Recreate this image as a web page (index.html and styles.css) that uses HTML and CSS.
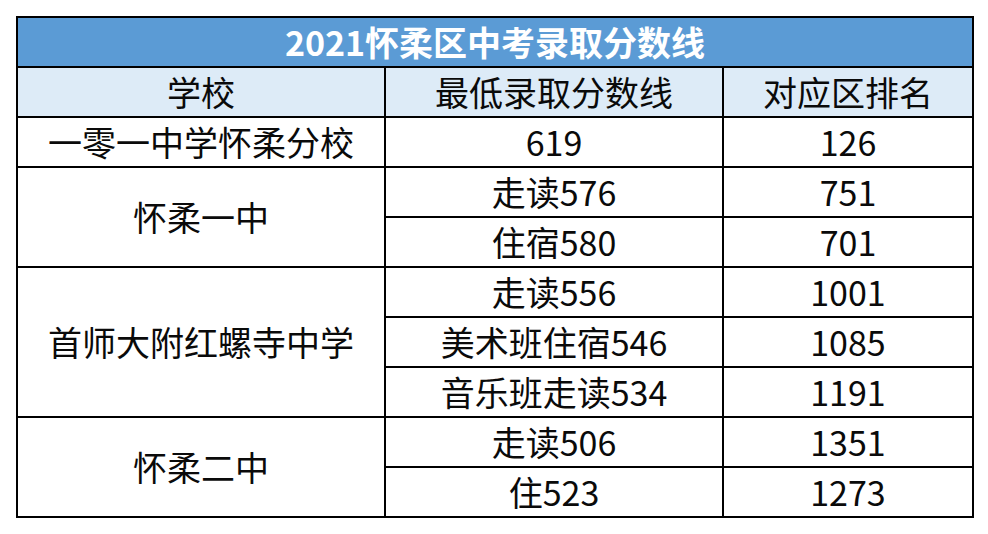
FILE: index.html
```html
<!DOCTYPE html>
<html lang="zh-CN">
<head>
<meta charset="utf-8">
<link rel="stylesheet" href="styles.css">
</head>
<body>
<div class="page">
<table class="score">
  <colgroup><col class="c1"><col class="c2"><col class="c3"></colgroup>
  <tr class="title"><td colspan="3">2021怀柔区中考录取分数线</td></tr>
  <tr class="head"><td>学校</td><td>最低录取分数线</td><td>对应区排名</td></tr>
  <tr><td>一零一中学怀柔分校</td><td>619</td><td>126</td></tr>
  <tr><td rowspan="2">怀柔一中</td><td>走读576</td><td>751</td></tr>
  <tr><td>住宿580</td><td>701</td></tr>
  <tr><td rowspan="3">首师大附红螺寺中学</td><td>走读556</td><td>1001</td></tr>
  <tr><td>美术班住宿546</td><td>1085</td></tr>
  <tr><td>音乐班走读534</td><td>1191</td></tr>
  <tr><td rowspan="2">怀柔二中</td><td>走读506</td><td>1351</td></tr>
  <tr><td>住523</td><td>1273</td></tr>
</table>
</div>
</body>
</html>
```
FILE: styles.css
```css
html, body {
  margin: 0;
  padding: 0;
  background: #ffffff;
}
.page {
  padding: 16px 0 0 16px;
}
.score {
  border-collapse: collapse;
  table-layout: fixed;
  width: 956px;
  font-family: "Noto Sans CJK SC", "Noto Sans", sans-serif;
  font-size: 34px;
  color: #0a0a0a;
}
.c1 { width: 368px; }
.c2 { width: 338px; }
.c3 { width: 250px; }
.score td {
  border: 2px solid #000000;
  height: 48px;
  padding: 0;
  text-align: center;
  vertical-align: middle;
  line-height: 48px;
  white-space: nowrap;
  overflow: hidden;
}
.title td {
  background: #5b9bd5;
  color: #ffffff;
  font-weight: 700;
  font-size: 34px;
}
.head td {
  background: #ddebf7;
}
```
